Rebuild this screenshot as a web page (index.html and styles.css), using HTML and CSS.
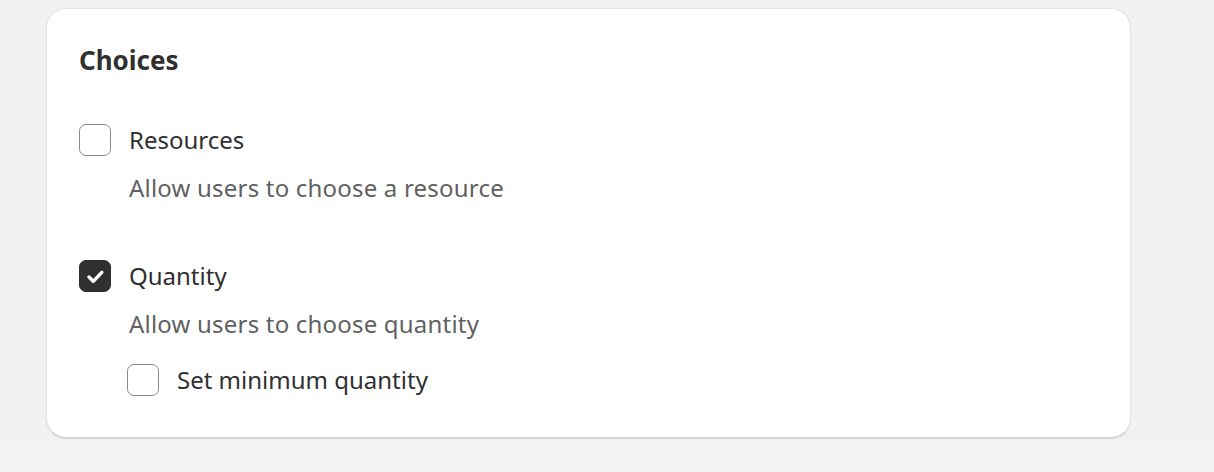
FILE: index.html
```html
<!DOCTYPE html>
<html lang="en">
<head>
<meta charset="utf-8">
<title>Choices</title>
<link rel="stylesheet" href="styles.css">
</head>
<body>
<div class="page">
  <section class="card">
    <h2 class="title">Choices</h2>
    <div class="options">
      <div class="option">
        <label class="check-row">
          <span class="box"></span>
          <span class="label">Resources</span>
        </label>
        <p class="help">Allow users to choose a resource</p>
      </div>
      <div class="option">
        <label class="check-row">
          <span class="box checked">
            <svg viewBox="0 0 32 32" width="32" height="32" aria-hidden="true"><path d="M10 17 L14.3 21.4 L22.8 12.3" fill="none" stroke="#fff" stroke-width="3.4" stroke-linecap="round" stroke-linejoin="round"/></svg>
          </span>
          <span class="label">Quantity</span>
        </label>
        <p class="help">Allow users to choose quantity</p>
        <div class="sub">
          <label class="check-row">
            <span class="box"></span>
            <span class="label">Set minimum quantity</span>
          </label>
        </div>
      </div>
    </div>
  </section>
</div>
</body>
</html>
```
FILE: styles.css
```css
html, body {
  margin: 0;
  padding: 0;
  background: #f3f3f3;
}
body {
  font-family: "Noto Sans", "Open Sans", sans-serif;
  color: #303030;
}
.page {
  height: 440px;
  box-sizing: border-box;
  padding: 8px 0 0 46px;
  background: #f1f1f1;
}
.card {
  width: 1085px;
  height: 430px;
  box-sizing: border-box;
  background: #fff;
  border: 1px solid #e3e3e3;
  border-bottom-color: #d0d0d0;
  border-radius: 20px;
  box-shadow: 0 1px 1px rgba(0, 0, 0, 0.10);
  padding: 31px 32px 0 32px;
}
.title {
  margin: 0;
  font-size: 26px;
  line-height: 40px;
  font-weight: 700;
}
.options {
  margin-top: 44px;
  display: flex;
  flex-direction: column;
  gap: 56px;
}
.check-row {
  display: flex;
  align-items: center;
  gap: 18px;
}
.box {
  width: 32px;
  height: 32px;
  box-sizing: border-box;
  border: 1.5px solid #8a8a8a;
  border-radius: 7px;
  background: #fff;
  flex: none;
  display: flex;
}
.box.checked {
  background: #303030;
  border-color: #303030;
}
.box.checked svg {
  margin: -1.5px;
}
.label {
  font-size: 24px;
  line-height: 32px;
}
.help {
  margin: 16px 0 0 50px;
  font-size: 24px;
  line-height: 32px;
  color: #616161;
  letter-spacing: 0.2px;
}
.sub {
  margin: 24px 0 0 48px;
}
```
